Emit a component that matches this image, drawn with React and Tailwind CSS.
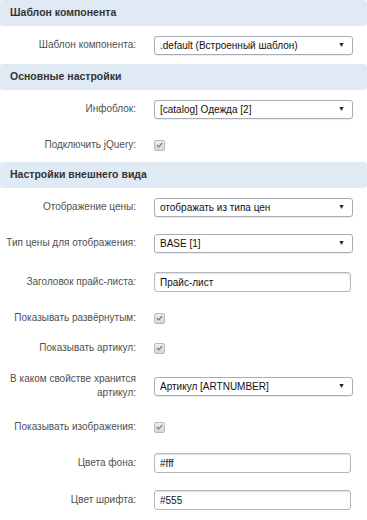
import React from "react";

const font = { fontFamily: '"Liberation Sans", Arial, sans-serif' };

const Header = ({ children }) => (
  <div className="h-[26px] flex items-center px-[10px] rounded-[3px] bg-[#e0eaf4] text-[10.5px] font-bold text-[#333]">
    {children}
  </div>
);

const Row = ({ label, h, children }) => (
  <div className={`flex items-center ${h}`}>
    <div className="w-[136px] shrink-0 text-right whitespace-nowrap text-[10px] leading-[14px] text-[#505050]">{label}</div>
    <div className="ml-[18px] flex items-center">{children}</div>
  </div>
);

const Select = ({ value }) => (
  <div className="w-[199px] h-[19px] flex items-center justify-between pl-[5px] pr-[7px] bg-white border border-[#a9adb3] rounded-[3px] shadow-[0_1px_1px_rgba(0,0,0,0.08)] text-[10px] text-[#111]">
    <span>{value}</span>
    <span className="text-[7px] text-[#222]">▼</span>
  </div>
);

const Input = ({ value }) => (
  <div className="w-[197px] h-[20px] flex items-center px-[5px] bg-white border border-[#b4b8bd] rounded-[3px] shadow-[inset_0_1px_1px_rgba(0,0,0,0.12)] text-[10px] text-[#111]">
    {value}
  </div>
);

const Check = () => (
  <span className="w-[11px] h-[11px] flex items-center justify-center rounded-[2px] border border-[#b9b9b9] bg-gradient-to-b from-[#eeeeee] to-[#d6d6d6]">
    <svg width="7" height="6" viewBox="0 0 7 6">
      <path d="M0.8 3 L2.6 4.8 L6.2 1" fill="none" stroke="#7a7a7a" strokeWidth="1.2" />
    </svg>
  </span>
);

export default function App() {
  return (
    <div className="w-[367px] h-[520px] bg-white overflow-hidden" style={font}>
      <Header>Шаблон компонента</Header>
      <Row label="Шаблон компонента:" h="h-[38px]">
        <Select value=".default (Встроенный шаблон)" />
      </Row>

      <Header>Основные настройки</Header>
      <Row label="Инфоблок:" h="h-[38px]">
        <Select value="[catalog] Одежда [2]" />
      </Row>
      <Row label="Подключить jQuery:" h="h-[34px]">
        <Check />
      </Row>

      <Header>Настройки внешнего вида</Header>
      <Row label="Отображение цены:" h="h-[38px]">
        <Select value="отображать из типа цен" />
      </Row>
      <Row label="Тип цены для отображения:" h="h-[34px]">
        <Select value="BASE [1]" />
      </Row>
      <Row label="Заголовок прайс-листа:" h="h-[44px]">
        <Input value="Прайс-лист" />
      </Row>
      <Row label="Показывать развёрнутым:" h="h-[28px]">
        <Check />
      </Row>
      <Row label="Показывать артикул:" h="h-[32px]">
        <Check />
      </Row>
      <Row label={<>В каком свойстве хранится<br />артикул:</>} h="h-[44px]">
        <Select value="Артикул [ARTNUMBER]" />
      </Row>
      <Row label="Показывать изображения:" h="h-[38px]">
        <Check />
      </Row>
      <Row label="Цвета фона:" h="h-[34px]">
        <Input value="#fff" />
      </Row>
      <Row label="Цвет шрифта:" h="h-[40px]">
        <Input value="#555" />
      </Row>
    </div>
  );
}
